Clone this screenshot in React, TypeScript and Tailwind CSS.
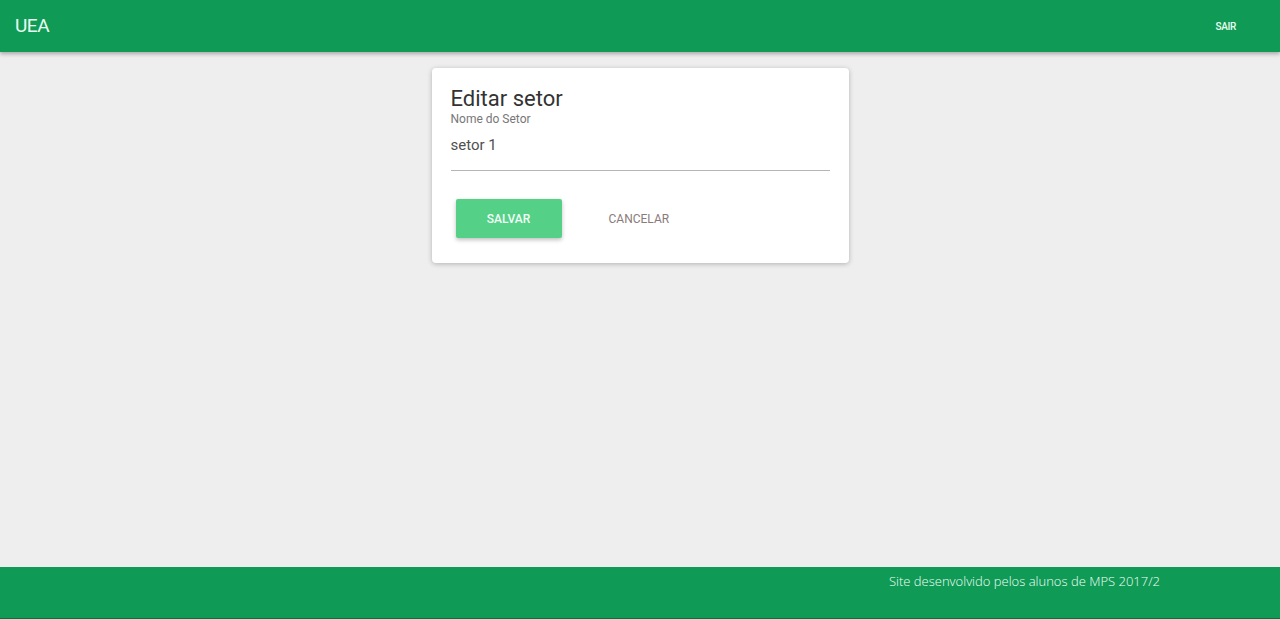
const App = () => {
  return (
    <div
      className="flex flex-col min-h-screen h-[619px] bg-[#eeeeee]"
      style={{ fontFamily: "Roboto, 'Liberation Sans', sans-serif" }}
    >
      {/* Header */}
      <header className="h-[52px] bg-[#0f9a56] shadow-[0_2px_4px_rgba(0,0,0,0.3)] flex items-center justify-between pl-[15px] pr-[44px] relative z-10">
        <span className="text-[19px] text-[#e9fff1] tracking-tight">UEA</span>
        <span className="text-[10px] font-medium text-[#e9fff1] tracking-[-0.3px]">SAIR</span>
      </header>

      {/* Content */}
      <main className="flex-1 flex justify-center pt-[16px]">
        <div className="w-[417px] h-[195px] bg-white rounded-[4px] shadow-[0_1px_5px_rgba(0,0,0,0.25)] px-[19px] pt-[18px]">
          <h1 className="text-[22px] leading-[26px] text-[#333333]">Editar setor</h1>
          <div className="text-[12px] leading-[14px] text-[#777777]">Nome do Setor</div>
          <div className="mt-[9px] text-[15px] leading-[20px] text-[#505050]">setor 1</div>
          <div className="mt-[15px] border-b border-[#b5b5b5]" />
          <div className="mt-[28px] flex items-center">
            <button className="ml-[5px] w-[106px] h-[39px] bg-[#54d087] rounded-[2px] shadow-[0_2px_4px_rgba(0,0,0,0.25)] text-[12px] font-medium text-[#f1fff6]">
              SALVAR
            </button>
            <button className="ml-[47px] text-[12px] text-[#8a7b7b]">CANCELAR</button>
          </div>
        </div>
      </main>

      {/* Footer */}
      <footer className="h-[52px] bg-[#0f9a56] border-b border-[#0b6e3e] flex justify-end pr-[120px] pt-[5px]">
        <span
          className="text-[13px] text-[#f1fff6] font-light"
          style={{ fontFamily: "'Open Sans', sans-serif" }}
        >
          Site desenvolvido pelos alunos de MPS 2017/2
        </span>
      </footer>
    </div>
  );
};

export default App;
